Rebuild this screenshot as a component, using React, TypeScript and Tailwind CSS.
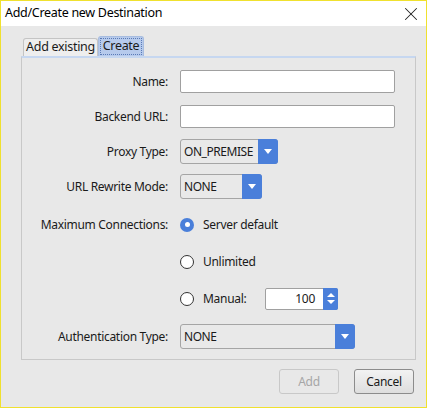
import { X } from "lucide-react";

const font = "font-['Noto_Sans','Open_Sans',sans-serif] tracking-[-0.3px]";

const Label = ({ children }: { children: React.ReactNode }) => (
  <div className="w-[146px] shrink-0 text-right text-[12px] text-[#1a1a1a]">{children}</div>
);

const Arrow = () => (
  <div className="h-0 w-0 border-x-[4px] border-t-[5px] border-x-transparent border-t-white" />
);

const Combo = ({ value, width }: { value: string; width: string }) => (
  <div className={`flex h-[25px] ${width} items-stretch rounded-[3px] border border-[#a5a5a5] bg-[#e9e9e9]`}>
    <div className="flex flex-1 items-center overflow-hidden whitespace-nowrap pl-[3px] text-[12px] tracking-[-0.45px] text-[#1a1a1a]">
      {value}
    </div>
    <div className="-my-px -mr-px flex w-[20px] shrink-0 items-center justify-center rounded-r-[3px] bg-[#4a7fda]">
      <Arrow />
    </div>
  </div>
);

const Radio = ({ checked, label }: { checked?: boolean; label: string }) => (
  <div className="flex items-center gap-[9px]">
    {checked ? (
      <div className="flex h-[14px] w-[14px] items-center justify-center rounded-full bg-[#4a7fda]">
        <div className="h-[5px] w-[5px] rounded-full bg-white" />
      </div>
    ) : (
      <div className="h-[14px] w-[14px] rounded-full border border-[#333] bg-white" />
    )}
    <span className="text-[12px] text-[#1a1a1a]">{label}</span>
  </div>
);

export default function App() {
  return (
    <div className={`${font} flex h-[408px] w-[427px] flex-col border border-[#f0e12e] bg-[#e8e8e8]`}>
      {/* Title bar */}
      <div className="flex h-[25px] shrink-0 items-center justify-between bg-white pl-[4px] pr-[4px]">
        <span className="text-[12.5px] text-black">Add/Create new Destination</span>
        <X className="h-[22px] w-[22px] text-[#222]" strokeWidth={1.1} />
      </div>

      <div className="flex flex-1 flex-col pl-[20px] pr-[10px] pt-[10px]">
        {/* Tabs */}
        <div className="ml-[2px] flex h-[20px] items-end">
          <div className="flex h-[18px] w-[75px] items-center justify-center rounded-t-[3px] border border-b-0 border-[#c4c4c4] bg-[#eeeeee] text-[12.5px] text-[#1a1a1a]">
            Add existing
          </div>
          <div className="flex h-[20px] w-[46px] items-center justify-center rounded-t-[3px] border border-b-0 border-[#a8bde0] bg-[#b6caec] p-[1px]">
            <div className="flex h-full w-full items-center justify-center border border-dotted border-[#5b7bb5] text-[12.5px] text-[#1a1a1a]">
              Create
            </div>
          </div>
        </div>

        {/* Panel */}
        <div className="flex h-[304px] flex-col border border-[#c8c8c8] border-t-2 border-t-[#c6d7f0] pt-[6px]">
          <div className="flex h-[35px] items-center gap-[12px]">
            <Label>Name:</Label>
            <div className="h-[23px] w-[215px] rounded-[2px] border border-[#a0a0a0] bg-white" />
          </div>
          <div className="flex h-[35px] items-center gap-[12px]">
            <Label>Backend URL:</Label>
            <div className="h-[23px] w-[215px] rounded-[2px] border border-[#a0a0a0] bg-white" />
          </div>
          <div className="flex h-[35px] items-center gap-[12px]">
            <Label>Proxy Type:</Label>
            <Combo value="ON_PREMISE" width="w-[98px]" />
          </div>
          <div className="flex h-[35px] items-center gap-[12px]">
            <Label>URL Rewrite Mode:</Label>
            <Combo value="NONE" width="w-[82px]" />
          </div>
          <div className="mt-[2px] flex h-[37px] items-center gap-[12px]">
            <Label>Maximum Connections:</Label>
            <Radio checked label="Server default" />
          </div>
          <div className="flex h-[37px] items-center gap-[12px]">
            <div className="w-[146px] shrink-0" />
            <Radio label="Unlimited" />
          </div>
          <div className="flex h-[37px] items-center gap-[12px]">
            <div className="w-[146px] shrink-0" />
            <div className="w-[73px] shrink-0">
              <Radio label="Manual:" />
            </div>
            <div className="flex h-[22px] w-[73px] items-stretch rounded-[2px] border border-[#a0a0a0] bg-white">
              <div className="flex flex-1 items-center justify-end pr-[8px] text-[12px] text-[#1a1a1a]">100</div>
              <div className="-my-px -mr-px flex w-[15px] flex-col items-center justify-center gap-[3px] rounded-r-[2px] bg-[#4a7fda]">
                <div className="h-0 w-0 border-x-[4px] border-b-[4px] border-x-transparent border-b-white" />
                <div className="h-0 w-0 border-x-[4px] border-t-[4px] border-x-transparent border-t-white" />
              </div>
            </div>
          </div>
          <div className="mt-[1px] flex h-[37px] items-center gap-[12px]">
            <Label>Authentication Type:</Label>
            <Combo value="NONE" width="w-[175px]" />
          </div>
        </div>
      </div>

      {/* Footer */}
      <div className="flex justify-end gap-[15px] pb-[13px] pr-[12px] pt-[9px]">
        <button className="h-[25px] w-[60px] rounded-[3px] border border-[#c8c8c8] bg-[#e8e8e8] text-[12px] text-[#a6a6a6]">
          Add
        </button>
        <button className="h-[25px] w-[60px] rounded-[3px] border border-[#8c8c8c] bg-gradient-to-b from-[#f2f2f2] to-[#dedede] text-[12px] text-[#1a1a1a]">
          Cancel
        </button>
      </div>
    </div>
  );
}
